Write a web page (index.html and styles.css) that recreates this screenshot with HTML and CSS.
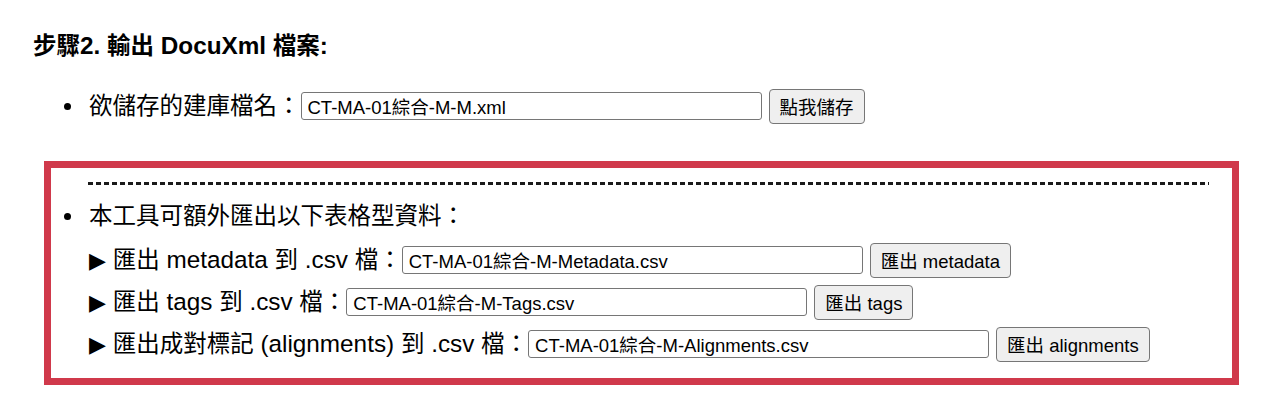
FILE: index.html
```html
<!DOCTYPE html>
<html lang="zh-Hant">
<head>
<meta charset="utf-8">
<title>DocuXml</title>
<link rel="stylesheet" href="styles.css">
</head>
<body>
<div class="page">
  <p class="title">步驟<span class="lat">2. </span>輸出<span class="lat"> DocuXml </span>檔案<span class="lat">:</span></p>
  <div class="row first">
    <span class="bullet"></span>
    <span class="label">欲儲存的建庫檔名：</span>
    <input class="field" type="text" value="CT-MA-01綜合-M-M.xml">
    <button class="btn">點我儲存</button>
  </div>
</div>
<div class="extra">
  <div class="dash"></div>
  <div class="row intro">
    <span class="bullet"></span>
    <span class="label">本工具可額外匯出以下表格型資料：</span>
  </div>
  <div class="row sub top">
    <span class="label"><span class="tri">▶</span><span class="lat"> </span>匯出<span class="lat"> metadata </span>到<span class="lat"> .csv </span>檔：</span>
    <input class="field" type="text" value="CT-MA-01綜合-M-Metadata.csv">
    <button class="btn">匯出 metadata</button>
  </div>
  <div class="row sub">
    <span class="label"><span class="tri">▶</span><span class="lat"> </span>匯出<span class="lat"> tags </span>到<span class="lat"> .csv </span>檔：</span>
    <input class="field" type="text" value="CT-MA-01綜合-M-Tags.csv">
    <button class="btn">匯出 tags</button>
  </div>
  <div class="row sub">
    <span class="label"><span class="tri">▶</span><span class="lat"> </span>匯出成對標記<span class="lat"> (alignments) </span>到<span class="lat"> .csv </span>檔：</span>
    <input class="field" type="text" value="CT-MA-01綜合-M-Alignments.csv">
    <button class="btn">匯出 alignments</button>
  </div>
</div>
</body>
</html>
```
FILE: styles.css
```css
html, body {
  margin: 0;
  background: #fff;
}
body {
  font-family: "Liberation Sans", "Noto Sans CJK TC", sans-serif;
  font-size: 23.5px;
  color: #000;
}
.lat {
  font-size: 24.3px;
}
.page {
  padding: 30px 0 0 33px;
}
.title {
  margin: 0;
  font-weight: bold;
  line-height: 32px;
}
.row {
  display: flex;
  align-items: center;
  height: 36px;
  white-space: nowrap;
}
.row.first {
  margin-top: 26px;
  padding-left: 31px;
}
.bullet {
  width: 7px;
  height: 7px;
  border-radius: 50%;
  background: #000;
  margin-right: 18px;
  flex: none;
}
.label {
  line-height: 32px;
}
.tri {
  font-family: "DejaVu Sans", sans-serif;
  font-size: 22px;
}
.field {
  box-sizing: border-box;
  width: 461px;
  height: 28px;
  margin: 0 7px 0 0;
  padding: 0 6px;
  border: 1px solid #767676;
  border-radius: 3px;
  font-family: "Liberation Sans", "Noto Sans CJK TC", sans-serif;
  font-size: 18.5px;
  color: #000;
  background: #fff;
}
.btn {
  box-sizing: border-box;
  height: 35px;
  margin: 0;
  padding: 0 10px;
  border: 1px solid #767676;
  border-radius: 4px;
  background: #efefef;
  font-family: "Liberation Sans", "Noto Sans CJK TC", sans-serif;
  font-size: 18.5px;
  color: #000;
}
.extra {
  box-sizing: border-box;
  width: 1195px;
  margin: 37px 0 0 44px;
  border: 7px solid #d0394b;
  padding: 14px 23px 16px 13px;
}
.dash {
  height: 3px;
  margin-left: 24px;
  background: repeating-linear-gradient(to right, #1a1a1a 0, #1a1a1a 5px, transparent 5px, transparent 8px);
}
.row.intro {
  margin-top: 15px;
  height: 32px;
}
.row.sub {
  padding-left: 25px;
  margin-top: 6px;
}
.row.sub.top {
  margin-top: 10px;
}
```
